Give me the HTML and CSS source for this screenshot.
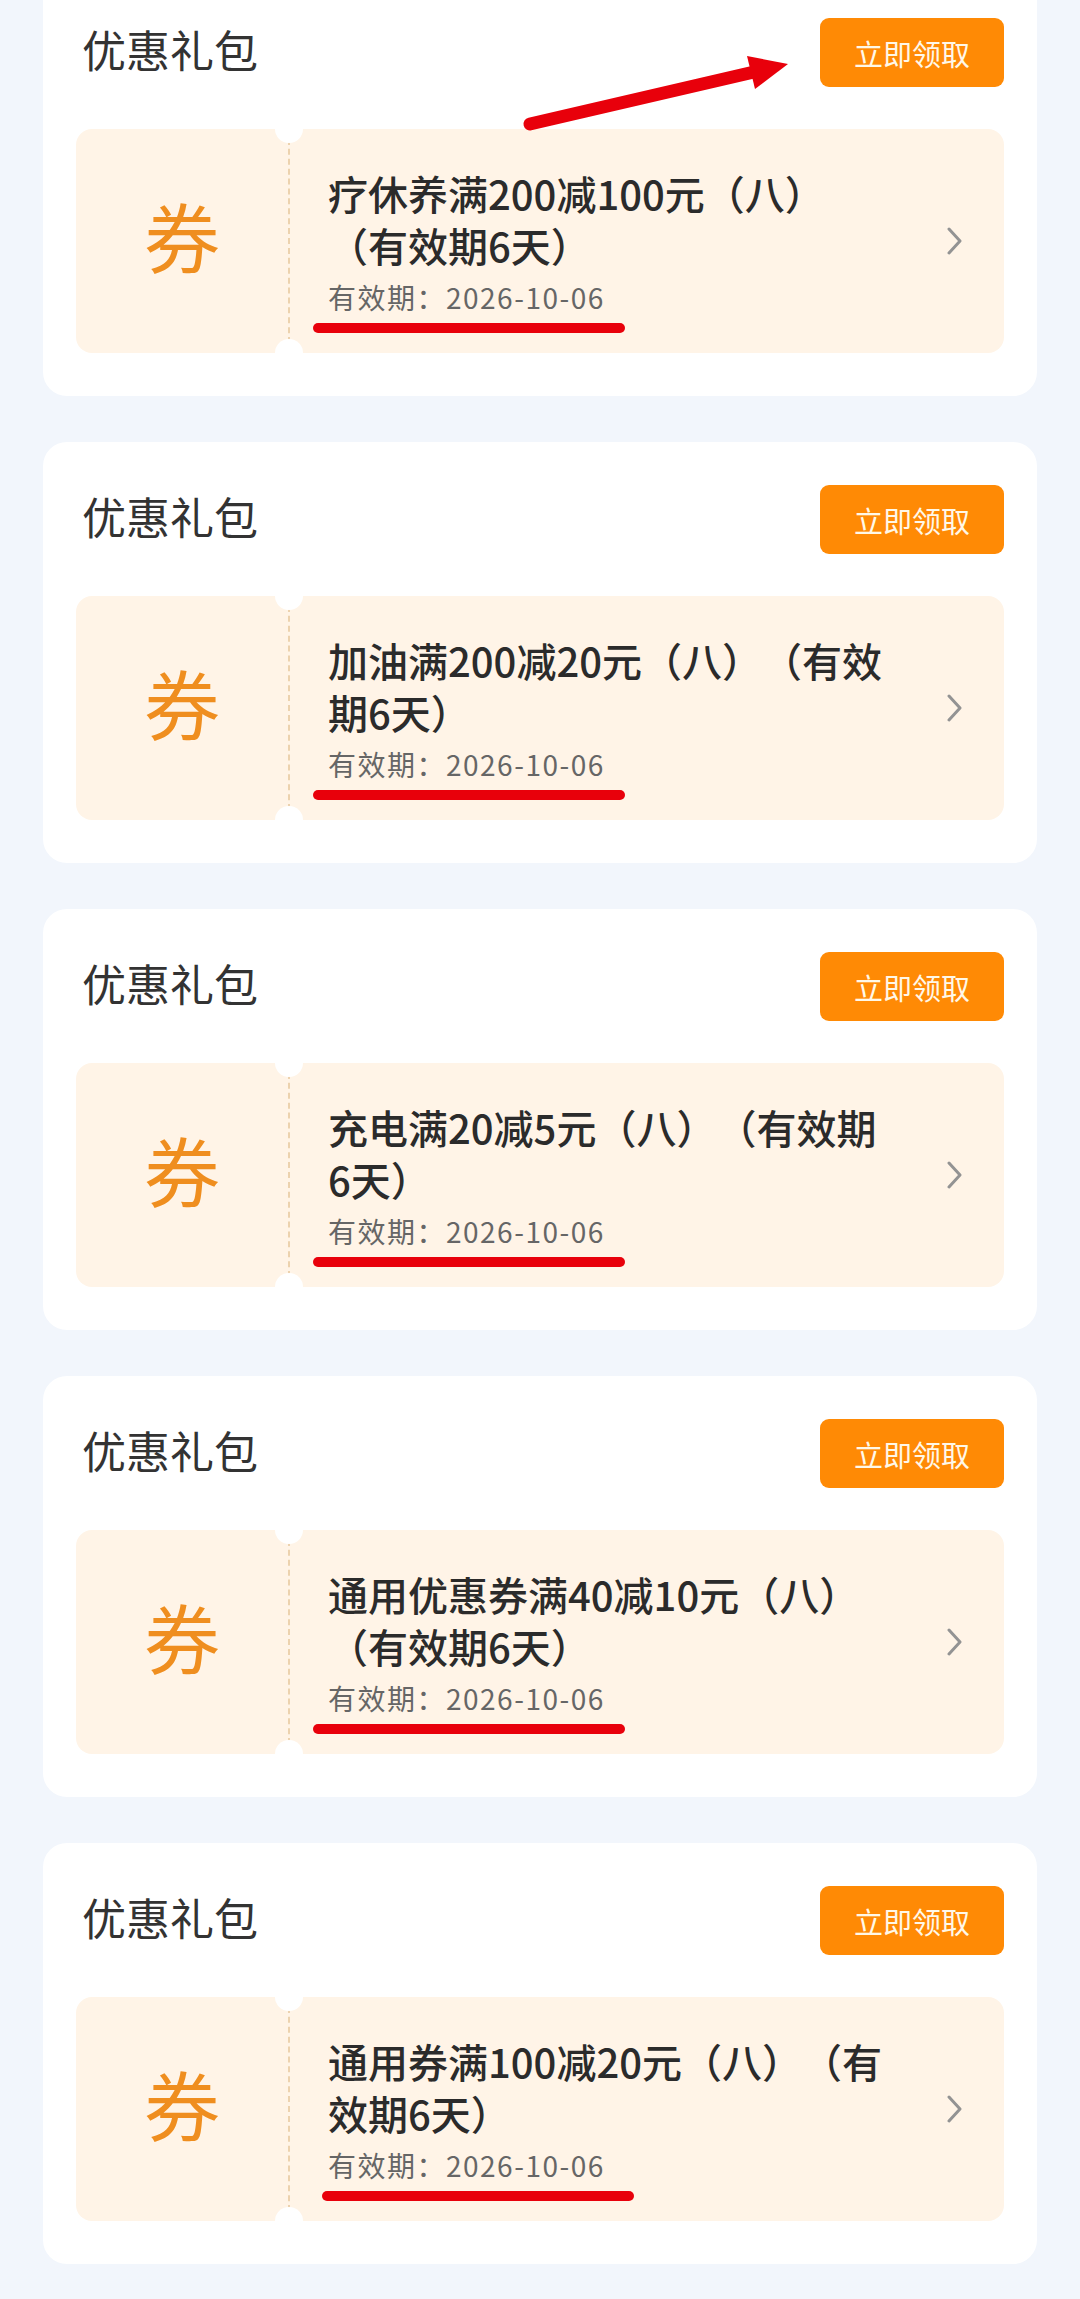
FILE: index.html
```html
<!DOCTYPE html>
<html lang="zh-CN">

<head>
    <meta charset="UTF-8">
    <meta name="viewport" content="width=device-width, initial-scale=1.0">
    <title>优惠礼包</title>
    <link rel="stylesheet" href="styles.css">
</head>

<body>
    <div class="list">
        <div class="card">
            <div class="card-head">
                <h2 class="card-title">优惠礼包</h2>
                <button class="button">立即领取</button>
            </div>
            <div class="coupon">
                <div class="coupon-tag">券</div>
                <div class="coupon-body">
                    <div class="coupon-info">
                        <div class="coupon-name">疗休养满200减100元（八）（有效期6天）</div>
                        <div class="coupon-date">有效期：2026-10-06</div>
                    </div>
                    <svg class="chevron" width="15" height="28" viewBox="0 0 15 28">
                        <path d="M2 2 L13 14 L2 26" />
                    </svg>
                </div>
            </div>
            <!-- arrow pointing at the button -->
            <svg class="arrow" width="280" height="90" viewBox="0 0 280 90">
                <line x1="10" y1="77" x2="234" y2="25" />
                <polygon points="268,17 227,9 235,42" />
            </svg>
        </div>

        <div class="card">
            <div class="card-head">
                <h2 class="card-title">优惠礼包</h2>
                <button class="button">立即领取</button>
            </div>
            <div class="coupon">
                <div class="coupon-tag">券</div>
                <div class="coupon-body">
                    <div class="coupon-info">
                        <div class="coupon-name">加油满200减20元（八）（有效期6天）</div>
                        <div class="coupon-date">有效期：2026-10-06</div>
                    </div>
                    <svg class="chevron" width="15" height="28" viewBox="0 0 15 28">
                        <path d="M2 2 L13 14 L2 26" />
                    </svg>
                </div>
            </div>
        </div>

        <div class="card">
            <div class="card-head">
                <h2 class="card-title">优惠礼包</h2>
                <button class="button">立即领取</button>
            </div>
            <div class="coupon">
                <div class="coupon-tag">券</div>
                <div class="coupon-body">
                    <div class="coupon-info">
                        <div class="coupon-name">充电满20减5元（八）（有效期6天）</div>
                        <div class="coupon-date">有效期：2026-10-06</div>
                    </div>
                    <svg class="chevron" width="15" height="28" viewBox="0 0 15 28">
                        <path d="M2 2 L13 14 L2 26" />
                    </svg>
                </div>
            </div>
        </div>

        <div class="card">
            <div class="card-head">
                <h2 class="card-title">优惠礼包</h2>
                <button class="button">立即领取</button>
            </div>
            <div class="coupon">
                <div class="coupon-tag">券</div>
                <div class="coupon-body">
                    <div class="coupon-info">
                        <div class="coupon-name">通用优惠券满40减10元（八）（有效期6天）</div>
                        <div class="coupon-date">有效期：2026-10-06</div>
                    </div>
                    <svg class="chevron" width="15" height="28" viewBox="0 0 15 28">
                        <path d="M2 2 L13 14 L2 26" />
                    </svg>
                </div>
            </div>
        </div>

        <div class="card">
            <div class="card-head">
                <h2 class="card-title">优惠礼包</h2>
                <button class="button">立即领取</button>
            </div>
            <div class="coupon">
                <div class="coupon-tag">券</div>
                <div class="coupon-body">
                    <div class="coupon-info">
                        <div class="coupon-name">通用券满100减20元（八）（有效期6天）</div>
                        <div class="coupon-date coupon-date--wide">有效期：2026-10-06</div>
                    </div>
                    <svg class="chevron" width="15" height="28" viewBox="0 0 15 28">
                        <path d="M2 2 L13 14 L2 26" />
                    </svg>
                </div>
            </div>
        </div>
    </div>
</body>

</html>
```

FILE: styles.css
```css
body {
    font-family: "Noto Sans CJK SC", "Noto Sans", sans-serif;
    background: #f2f6fc;
    margin: 0;
    padding: 0;
}

.list {
    display: flex;
    flex-direction: column;
    gap: 46px;
    padding: 0 43px;
    margin-top: -25px;
}

.card {
    position: relative;
    background-color: #ffffff;
    border-radius: 24px;
    padding: 43px 33px;
}

.card-head {
    display: flex;
    justify-content: space-between;
    align-items: center;
    height: 69px;
    margin-bottom: 42px;
}

.card-title {
    margin: 0;
    padding: 0 0 8px 6px;
    font-size: 44px;
    line-height: 52px;
    font-weight: 400;
    color: #333;
}

.button {
    width: 184px;
    height: 69px;
    padding: 0;
    font-family: inherit;
    font-size: 29px;
    font-weight: 400;
    background-color: #ff8a05;
    color: #fff8e8;
    border: none;
    border-radius: 9px;
    cursor: pointer;
}

/* ticket */
.coupon {
    position: relative;
    display: flex;
    height: 224px;
    background-color: #fff4e7;
    border-radius: 16px;
}

.coupon-tag {
    width: 212px;
    display: flex;
    justify-content: center;
    align-items: center;
    padding-bottom: 12px;
    box-sizing: border-box;
    font-size: 76px;
    font-weight: 400;
    color: #ef8e1f;
}

.coupon-body {
    position: relative;
    flex: 1;
    display: flex;
    align-items: center;
    padding: 0 42px 0 38px;
    border-left: 2px dashed #ecd2ae;
}

.coupon-body::before,
.coupon-body::after {
    content: "";
    position: absolute;
    left: -15px;
    width: 28px;
    height: 28px;
    border-radius: 50%;
    background-color: #ffffff;
}

.coupon-body::before {
    top: -14px;
}

.coupon-body::after {
    bottom: -14px;
}

.coupon-info {
    width: 560px;
}

.coupon-name {
    font-size: 40px;
    line-height: 52px;
    font-weight: 500;
    color: #2b2b2b;
    text-spacing-trim: space-all;
}

.coupon-date {
    position: relative;
    margin-top: 8px;
    font-size: 28px;
    line-height: 36px;
    letter-spacing: 1.5px;
    color: #666;
}

/* red marker under the date */
.coupon-date::after {
    content: "";
    position: absolute;
    left: -15px;
    top: 44px;
    width: 312px;
    height: 10px;
    border-radius: 5px;
    background-color: #e8000b;
}

.coupon-date--wide::after {
    left: -6px;
}

.chevron {
    margin-left: auto;
    flex-shrink: 0;
}

.chevron path {
    fill: none;
    stroke: #939393;
    stroke-width: 3;
    stroke-linecap: round;
    stroke-linejoin: round;
}

.arrow {
    position: absolute;
    left: 477px;
    top: 72px;
}

.arrow line {
    stroke: #e8000b;
    stroke-width: 13;
    stroke-linecap: round;
}

.arrow polygon {
    fill: #e8000b;
}
```
